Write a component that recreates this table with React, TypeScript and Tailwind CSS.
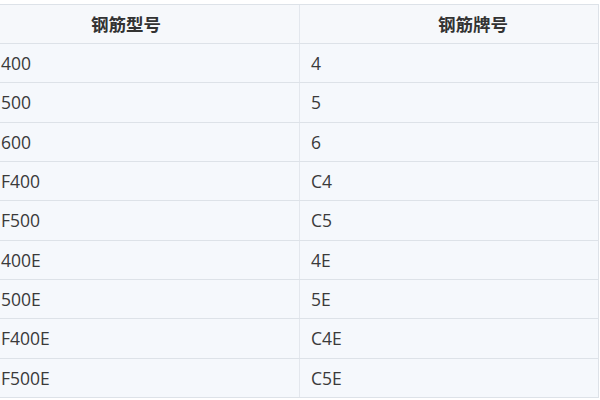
import React from "react";

const rows: [string, string][] = [
  ["400", "4"],
  ["500", "5"],
  ["600", "6"],
  ["F400", "C4"],
  ["F500", "C5"],
  ["400E", "4E"],
  ["500E", "5E"],
  ["F400E", "C4E"],
  ["F500E", "C5E"],
];

export default function App() {
  return (
    <div
      className="w-[600px] h-[400px] bg-white overflow-hidden pt-[4px]"
      style={{ fontFamily: '"Open Sans", "Noto Sans", "Noto Sans CJK SC", sans-serif' }}
    >
      <div className="w-[599px] border-t border-r border-[#dde2e8] text-[#333333]">
        <div className="flex h-[39px] bg-[#f6f8fb] border-b border-[#dde2e8] items-center text-[17.5px] font-bold">
          <div className="w-[300px] h-full flex items-center pl-[91px] border-r border-[#e3e7ed]">
            <span style={{ fontFamily: '"Noto Sans CJK SC", sans-serif' }}>钢筋型号</span>
          </div>
          <div className="flex-1 h-full flex items-center pl-[138px]">
            <span style={{ fontFamily: '"Noto Sans CJK SC", sans-serif' }}>钢筋牌号</span>
          </div>
        </div>
        {rows.map(([a, b]) => (
          <div
            key={a}
            className="flex h-[39.33px] bg-[#f5f8fc] border-b border-[#dde2e8] items-center text-[17.5px] text-[#3a3a3a]"
          >
            <div className="w-[300px] h-full flex items-center pl-[1px] border-r border-[#e3e7ed]">{a}</div>
            <div className="flex-1 h-full flex items-center pl-[11px]">{b}</div>
          </div>
        ))}
      </div>
    </div>
  );
}
